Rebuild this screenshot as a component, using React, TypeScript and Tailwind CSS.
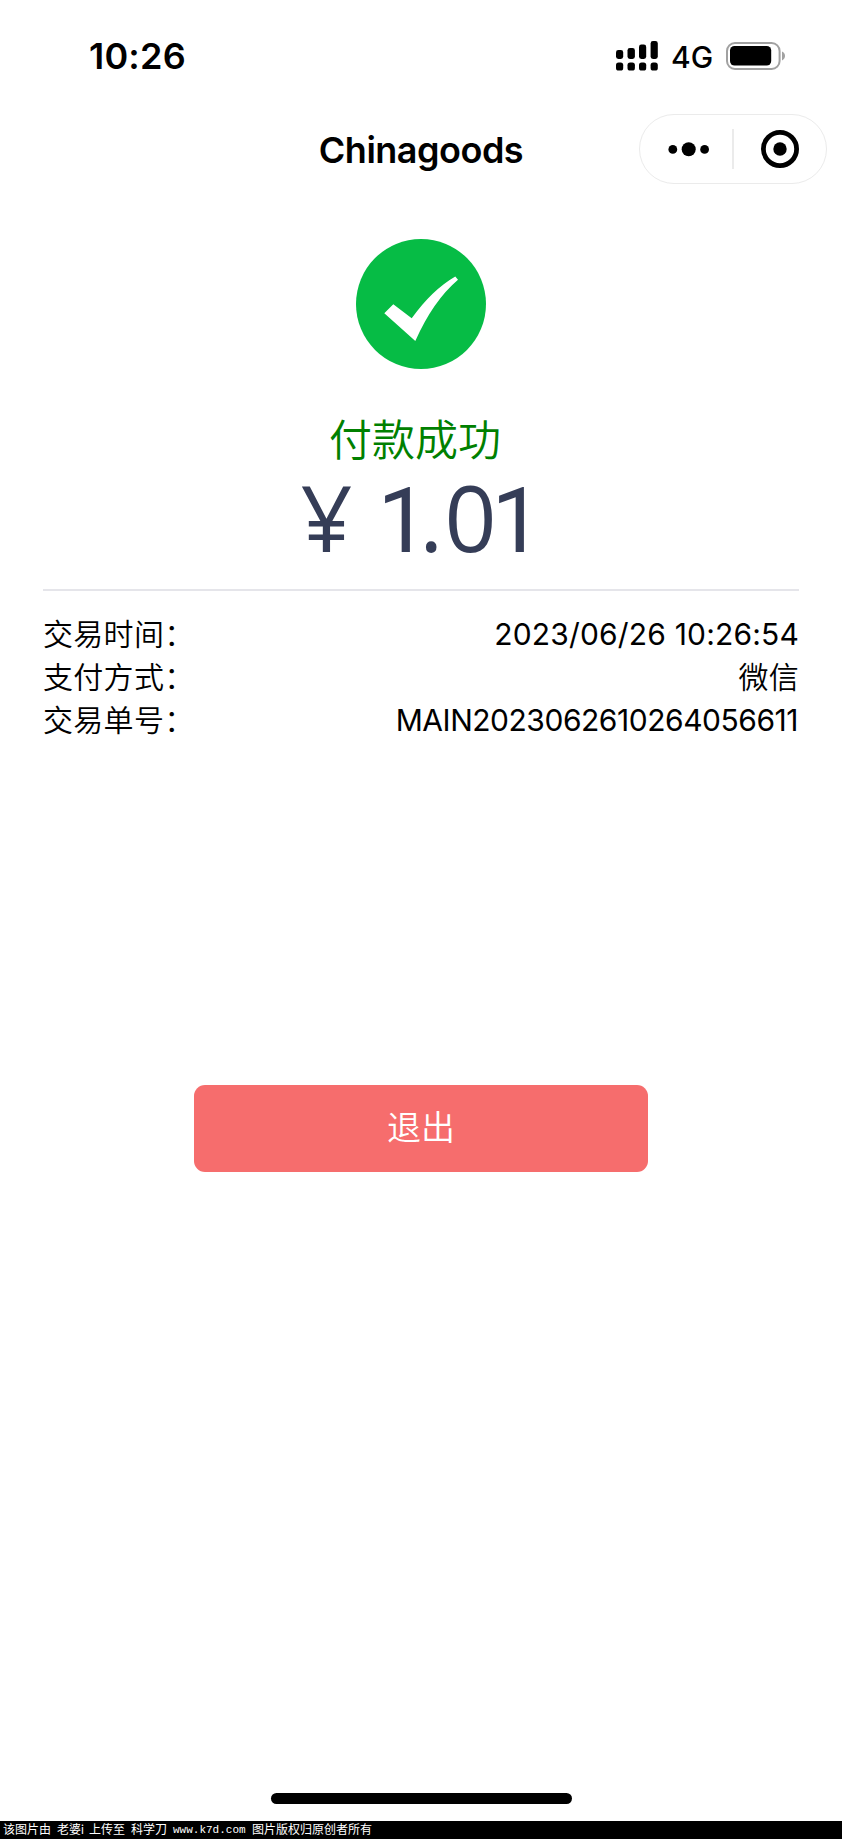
const details = [
  { label: '交易时间：', value: '2023/06/26 10:26:54', style: 'tracking-[0.17px]' },
  { label: '支付方式：', value: '微信', style: 'font-[350] tracking-[0.3px]' },
  { label: '交易单号：', value: 'MAIN2023062610264056611', style: 'mr-px tracking-[-0.47px]' },
];

function StatusIcons() {
  return (
    <div className="flex h-[34px] items-center">
      <svg className="h-[34px] w-[56px]" viewBox="614 39 56 34">
        <rect x="616" y="50" width="7.2" height="9" rx="2.4" />
        <rect x="627.5" y="48" width="7.4" height="11" rx="2.4" />
        <rect x="639" y="44.5" width="7.2" height="14.5" rx="2.4" />
        <rect x="650.6" y="41" width="7.2" height="18" rx="2.4" />
        <rect x="616" y="62.6" width="7.2" height="8" rx="2.6" />
        <rect x="627.5" y="62.6" width="7.4" height="8" rx="2.6" />
        <rect x="639" y="62.6" width="7.2" height="8" rx="2.6" />
        <rect x="650.6" y="62.6" width="7.2" height="8" rx="2.6" />
      </svg>
      <span className="mt-[2px] w-[54px] pl-px text-[30px] leading-[34px] font-medium">4G</span>
      <svg className="h-[34px] w-[64px]" viewBox="724 39 64 34">
        <rect x="730" y="46" width="41.2" height="19.6" rx="4.5" />
        <rect x="727" y="43" width="52.6" height="26" rx="8" fill="none" stroke="#a1a1a1" strokeWidth="2" />
        <path d="M782 51.5C786 53 786 58.5 782 60.5Z" fill="#a1a1a1" />
      </svg>
    </div>
  );
}

function Capsule() {
  return (
    <div className="flex h-[70px] w-[188px] items-center rounded-full border border-[#ebebeb]">
      <svg className="h-[68px] w-[186px]" viewBox="640 115 186 68">
        <circle cx="672.8" cy="149.4" r="4.4" />
        <circle cx="688.7" cy="149.2" r="7" />
        <circle cx="704.6" cy="149.4" r="4.4" />
        <rect x="732.2" y="129" width="1.6" height="40" fill="#e6e6e6" />
        <circle cx="780" cy="149" r="16.6" fill="none" stroke="#000" strokeWidth="4.8" />
        <circle cx="780" cy="149" r="6.7" />
      </svg>
    </div>
  );
}

export default function App() {
  return (
    <div className="flex h-[1839px] w-[842px] flex-col bg-white font-['Inter','Noto_Sans_CJK_SC',sans-serif] text-black">
      <header className="flex h-[112px] shrink-0 items-center justify-between pr-[54px] pl-[89px]">
        <span className="text-[36px] leading-none font-semibold tracking-[0.2px]">10:26</span>
        <StatusIcons />
      </header>
      <nav className="grid h-[74px] shrink-0 grid-cols-[1fr_auto_1fr] items-center pr-[15px] pl-[15px]">
        <span />
        <h1 className="mt-px text-[36px] leading-none font-semibold tracking-[-0.5px]">Chinagoods</h1>
        <div className="flex justify-end">
          <Capsule />
        </div>
      </nav>
      <main className="flex flex-1 flex-col px-[43px]">
        <section className="flex h-[405px] flex-col items-center border-b-2 border-[#e5e5ea] pt-[53px]">
          <svg className="size-[130px] shrink-0" viewBox="0 0 130 130">
            <circle cx="65" cy="65" r="65" fill="#06bc45" />
            <path d="M28.3 74.3L37.3 65.3L55.7 79.3Q76 51 99.3 37.5L102 40.7Q77 62 59.3 102Z" fill="#fff" />
          </svg>
          <p className="mt-[50px] mr-[12px] h-[43px] text-[43px] leading-[43px] font-[350] text-[#008000]">付款成功</p>
          <p className="mt-[5px] mr-[17px] h-[95px] w-[224px] font-['Open_Sans',sans-serif] text-[91px] leading-[100px] whitespace-pre text-[#353d57]">
            <span className="tracking-[0.6px]">¥ </span>
            <span className="font-['Roboto'] tracking-[-9.3px]">1</span>
            <span className="tracking-[1.4px]">.</span>
            <span className="tracking-[-5px]">0</span>
            <span className="font-['Roboto'] tracking-[-9.3px]">1</span>
          </p>
        </section>
        <dl className="mt-[22px] flex flex-col text-[30px] leading-[43px]">
          {details.map((d) => (
            <div key={d.label} className="flex h-[43px] justify-between">
              <dt className="font-[350] tracking-[0.3px]">{d.label}</dt>
              <dd className={d.style}>{d.value}</dd>
            </div>
          ))}
        </dl>
        <button className="mx-auto mt-[343px] flex h-[87px] w-[454px] items-center justify-center rounded-[11px] bg-[#f66d6d] pb-[2px] text-[34px] leading-none font-[350] text-white">
          退出
        </button>
      </main>
      <div className="mx-auto mb-[17px] h-[11px] w-[301px] shrink-0 rounded-full bg-black" />
      <footer className="flex h-[18px] shrink-0 items-center gap-[6px] bg-black pl-[3px] text-[12px] leading-none whitespace-nowrap text-white">
        <span className="w-[48px]">该图片由</span>
        <span className="w-[26px]">老婆i</span>
        <span className="w-[36px]">上传至</span>
        <span className="w-[36px]">科学刀</span>
        <span className="w-[73px] font-['Liberation_Mono',monospace] text-[11px]">www.k7d.com</span>
        <span>图片版权归原创者所有</span>
      </footer>
    </div>
  );
}
